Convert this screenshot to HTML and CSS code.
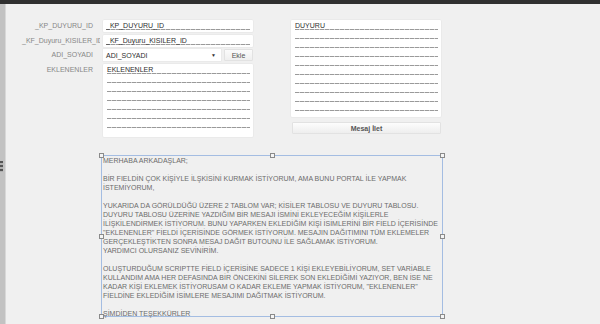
FILE: index.html
```html
<!DOCTYPE html>
<html>
<head>
<meta charset="utf-8">
<link rel="stylesheet" href="styles.css">
</head>
<body>
<div class="topbar"></div>
<div class="main">
  <div class="sidebar"><div class="grip"></div></div>
  <div class="content">
    <div class="form">
      <div class="fields">
        <div class="row">
          <div class="label">_KP_DUYURU_ID</div>
          <div class="field"><div class="line">_KP_DUYURU_ID</div></div>
        </div>
        <div class="row">
          <div class="label overflow">_KF_Duyuru_KISILER_ID</div>
          <div class="field"><div class="line">_KF_Duyuru_KISILER_ID</div></div>
        </div>
        <div class="row">
          <div class="label">ADI_SOYADI</div>
          <div class="combo">
            <div class="select"><span>ADI_SOYADI</span><span class="arrow">▼</span></div>
            <button class="small-btn">Ekle</button>
          </div>
        </div>
        <div class="row tall">
          <div class="label">EKLENENLER</div>
          <div class="field multi eklenen">
            <div class="line">EKLENENLER</div>
            <div class="line"></div>
            <div class="line"></div>
            <div class="line"></div>
            <div class="line"></div>
            <div class="line"></div>
            <div class="line"></div>
          </div>
        </div>
      </div>
      <div class="side">
        <div class="field multi duyuru">
          <div class="line">DUYURU</div>
          <div class="line"></div>
          <div class="line"></div>
          <div class="line"></div>
          <div class="line"></div>
          <div class="line"></div>
          <div class="line"></div>
          <div class="line"></div>
          <div class="line"></div>
          <div class="line"></div>
        </div>
        <button class="wide-btn">Mesaj İlet</button>
      </div>
    </div>
    <div class="note">
      <div class="text">MERHABA ARKADAŞLAR;<br><br>BİR FIELDİN ÇOK KİŞİYLE İLŞKİSİNİ KURMAK İSTİYORUM, AMA BUNU PORTAL İLE YAPMAK<br>İSTEMİYORUM,<br><br>YUKARIDA DA GÖRÜLDÜĞÜ ÜZERE 2 TABLOM VAR; KİSİLER TABLOSU VE DUYURU TABLOSU.<br>DUYURU TABLOSU ÜZERİNE YAZDIĞIM BİR MESAJI İSMİNİ EKLEYECEĞİM KİŞİLERLE<br>İLİŞKİLENDİRMEK İSTİYORUM. BUNU YAPARKEN EKLEDİĞİM KİŞİ İSİMLERİNİ BİR FİELD İÇERİSİNDE<br>"EKLENENLER" FİELDİ İÇERİSİNDE GÖRMEK İSTİYORUM. MESAJIN DAĞITIMINI TÜM EKLEMELER<br>GERÇEKLEŞTİKTEN SONRA MESAJ DAĞIT BUTOUNU İLE SAĞLAMAK İSTİYORUM.<br>YARDIMCI OLURSANIZ SEVİNİRİM.<br><br>OLUŞTURDUĞUM SCRIPTTE FİELD İÇERİSİNE SADECE 1 KİŞİ EKLEYEBİLİYORUM, SET VARİABLE<br>KULLANDIM AMA HER DEFASINDA BİR ÖNCEKİNİ SİLEREK SON EKLEDİĞİMİ YAZIYOR, BEN İSE NE<br>KADAR KİŞİ EKLEMEK İSTİYORUSAM O KADAR EKLEME YAPMAK İSTİYORUM, "EKLENENLER"<br>FİELDİNE EKLEDİĞİM İSİMLERE MESAJIMI DAĞITMAK İSTİYORUM.<br><br>ŞİMDİDEN TEŞEKKÜRLER</div>
      <span class="handle h-tl"></span>
      <span class="handle h-tc"></span>
      <span class="handle h-tr"></span>
      <span class="handle h-ml"></span>
      <span class="handle h-mr"></span>
      <span class="handle h-bl"></span>
      <span class="handle h-bc"></span>
      <span class="handle h-br"></span>
    </div>
  </div>
</div>
</body>
</html>
```

FILE: styles.css
```css
* { box-sizing: border-box; }
html, body { margin: 0; padding: 0; }
body {
  width: 600px;
  height: 324px;
  overflow: hidden;
  background: #f0f0f0;
  font-family: "Liberation Sans", Arial, sans-serif;
}
.topbar {
  height: 4px;
  background: #303030;
}
.main {
  display: flex;
  height: 320px;
}
.sidebar {
  width: 6px;
  flex: none;
  background: #c2c2c2;
  border-right: 1px solid #d8d8d8;
  padding-top: 157px;
}
.grip {
  width: 3px;
  height: 11px;
  background: repeating-linear-gradient(180deg, #555 0 2px, #b0b0b0 2px 4px);
}
.content {
  flex: 1;
  padding-top: 16px;
}
.form {
  display: flex;
  gap: 38px;
  margin-left: 14px;
}
.fields {
  display: flex;
  flex-direction: column;
  gap: 2.5px;
}
.row {
  display: flex;
  gap: 3px;
  height: 12px;
}
.row.tall { height: 73px; }
.label {
  width: 80px;
  padding-right: 7px;
  font-size: 7px;
  line-height: 12px;
  color: #878787;
  text-align: right;
  white-space: nowrap;
  overflow: hidden;
}
.label.overflow {
  text-align: left;
  padding-right: 0;
  padding-left: 2px;
}
.field {
  width: 150px;
  background: #fff;
  border-radius: 1px;
  padding: 1px 3px 0 3px;
  box-shadow: 0 0 0 0.5px #e4e4e4;
}
.multi.eklenen { height: 73px; padding-left: 4px; }
.line {
  height: 9px;
  font-size: 7px;
  line-height: 9px;
  color: #2e2e2e;
  padding-left: 0;
  background-image: repeating-linear-gradient(90deg, #9a9a9a 0 4px, #cfcfcf 4px 5px);
  background-size: 100% 1px;
  background-repeat: no-repeat;
  background-position: 0 8px;
  white-space: nowrap;
  overflow: hidden;
}
.combo {
  display: flex;
  gap: 3px;
  width: 150px;
}
.select {
  width: 118px;
  background: #fff;
  display: flex;
  justify-content: space-between;
  align-items: center;
  padding: 0 5px 0 3px;
  font-size: 7px;
  color: #2e2e2e;
  box-shadow: 0 0 0 0.5px #e4e4e4;
}
.arrow { font-size: 5px; color: #333; }
.small-btn {
  flex: 1;
  margin: 0;
  padding: 0;
  border: 1px solid #e2e2e2;
  border-radius: 1px;
  background: linear-gradient(#fbfbfb, #efefef);
  font-family: "Liberation Sans", Arial, sans-serif;
  font-size: 7px;
  color: #555;
}
.side {
  display: flex;
  flex-direction: column;
  gap: 5px;
  padding-top: 0;
}
.multi.duyuru {
  height: 97px;
  padding-left: 4px;
}
.wide-btn {
  width: 149px;
  height: 12px;
  margin: 0 0 0 1px;
  padding: 0;
  border: 1px solid #e2e2e2;
  border-radius: 1px;
  background: linear-gradient(#fdfdfd, #eeeeee);
  font-family: "Liberation Sans", Arial, sans-serif;
  font-size: 7px;
  font-weight: bold;
  color: #555;
}
.note {
  position: relative;
  margin-top: 18px;
  margin-left: 95px;
  width: 342px;
  height: 162px;
  border: 1px solid #a4bde2;
}
.text {
  font-size: 7px;
  line-height: 9px;
  color: #6c6c6c;
  padding-left: 1px;
  white-space: nowrap;
}
.handle {
  position: absolute;
  width: 5px;
  height: 5px;
  background: #f4f4f4;
  border: 1px solid #8a8a8a;
}
.h-tl { left: -3px; top: -3px; }
.h-tc { left: 168px; top: -3px; }
.h-tr { right: -3px; top: -3px; }
.h-ml { left: -3px; top: 78px; }
.h-mr { right: -3px; top: 78px; }
.h-bl { left: -3px; bottom: -3px; }
.h-bc { left: 168px; bottom: -3px; }
.h-br { right: -3px; bottom: -3px; }
```
